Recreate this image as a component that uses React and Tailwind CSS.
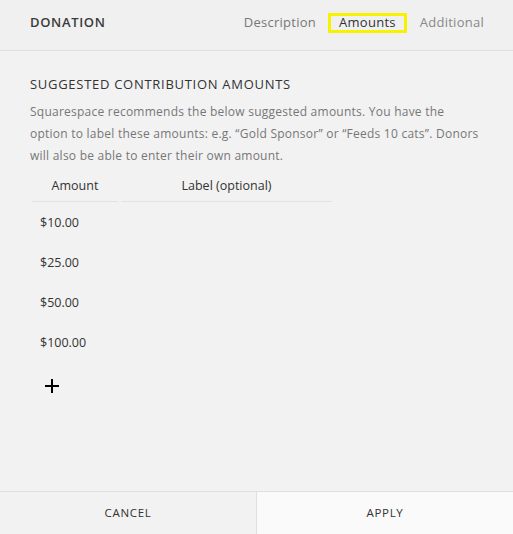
import React from "react";

const amounts = ["$10.00", "$25.00", "$50.00", "$100.00"];

export default function App() {
  return (
    <div
      className="w-[513px] h-[534px] flex flex-col bg-[#f2f2f2] text-[#333] overflow-hidden"
      style={{ fontFamily: '"Open Sans", "Liberation Sans", sans-serif' }}
    >
      {/* Header */}
      <header className="h-[51px] shrink-0 flex items-center justify-between pl-[30px] pr-[29px] pb-[4px] border-b border-[#e0e0e0] bg-[#f0f0f0]">
        <h1 className="text-[13px] font-semibold tracking-[0.05em] text-[#3a3a3a]">DONATION</h1>
        <nav className="flex items-center text-[13px] tracking-[0.02em]">
          <span className="text-[#777] mr-[12px]">Description</span>
          <span className="border-[3px] border-[#f7f200] px-[8px] h-[20px] flex items-center text-[#333] font-medium">
            Amounts
          </span>
          <span className="text-[#888] ml-[13px]">Additional</span>
        </nav>
      </header>

      {/* Body */}
      <main className="flex-1 px-[30px] pt-[24px]">
        <h2 className="text-[13px] font-medium tracking-[0.055em] text-[#333] leading-[18px]">
          SUGGESTED CONTRIBUTION AMOUNTS
        </h2>
        <p className="mt-[8px] text-[12px] leading-[22px] text-[#777] tracking-[0.02em] whitespace-nowrap">
          Squarespace recommends the below suggested amounts. You have the
          <br />
          option to label these amounts: e.g. “Gold Sponsor” or “Feeds 10 cats”. Donors
          <br />
          will also be able to enter their own amount.
        </p>

        <div className="mt-[4px] flex ml-[2px] text-[12.5px] text-[#333]">
          <div className="w-[86px] h-[31px] flex items-center justify-center border-b border-[#e2e2e2] mr-[3px]">
            Amount
          </div>
          <div className="w-[211px] h-[31px] flex items-center justify-center border-b border-[#e2e2e2]">
            Label (optional)
          </div>
        </div>

        <ul className="mt-[1px] text-[12.5px] text-[#333]">
          {amounts.map((a) => (
            <li key={a} className="h-[40px] flex items-center pl-[10px]">
              {a}
            </li>
          ))}
        </ul>

        <div className="ml-[15px] mt-[16px] w-[14px] h-[14px] relative">
          <span className="absolute left-0 top-[6px] w-[14px] h-[2px] bg-black" />
          <span className="absolute left-[6px] top-0 w-[2px] h-[14px] bg-black" />
        </div>
      </main>

      {/* Footer */}
      <footer className="h-[43px] shrink-0 flex border-t border-[#e0e0e0] text-[11.5px] font-medium tracking-[0.06em] text-[#333]">
        <button className="w-[257px] flex items-center justify-center bg-[#f2f2f2] border-r border-[#e0e0e0]">
          CANCEL
        </button>
        <button className="flex-1 flex items-center justify-center bg-[#fafafa]">APPLY</button>
      </footer>
    </div>
  );
}
